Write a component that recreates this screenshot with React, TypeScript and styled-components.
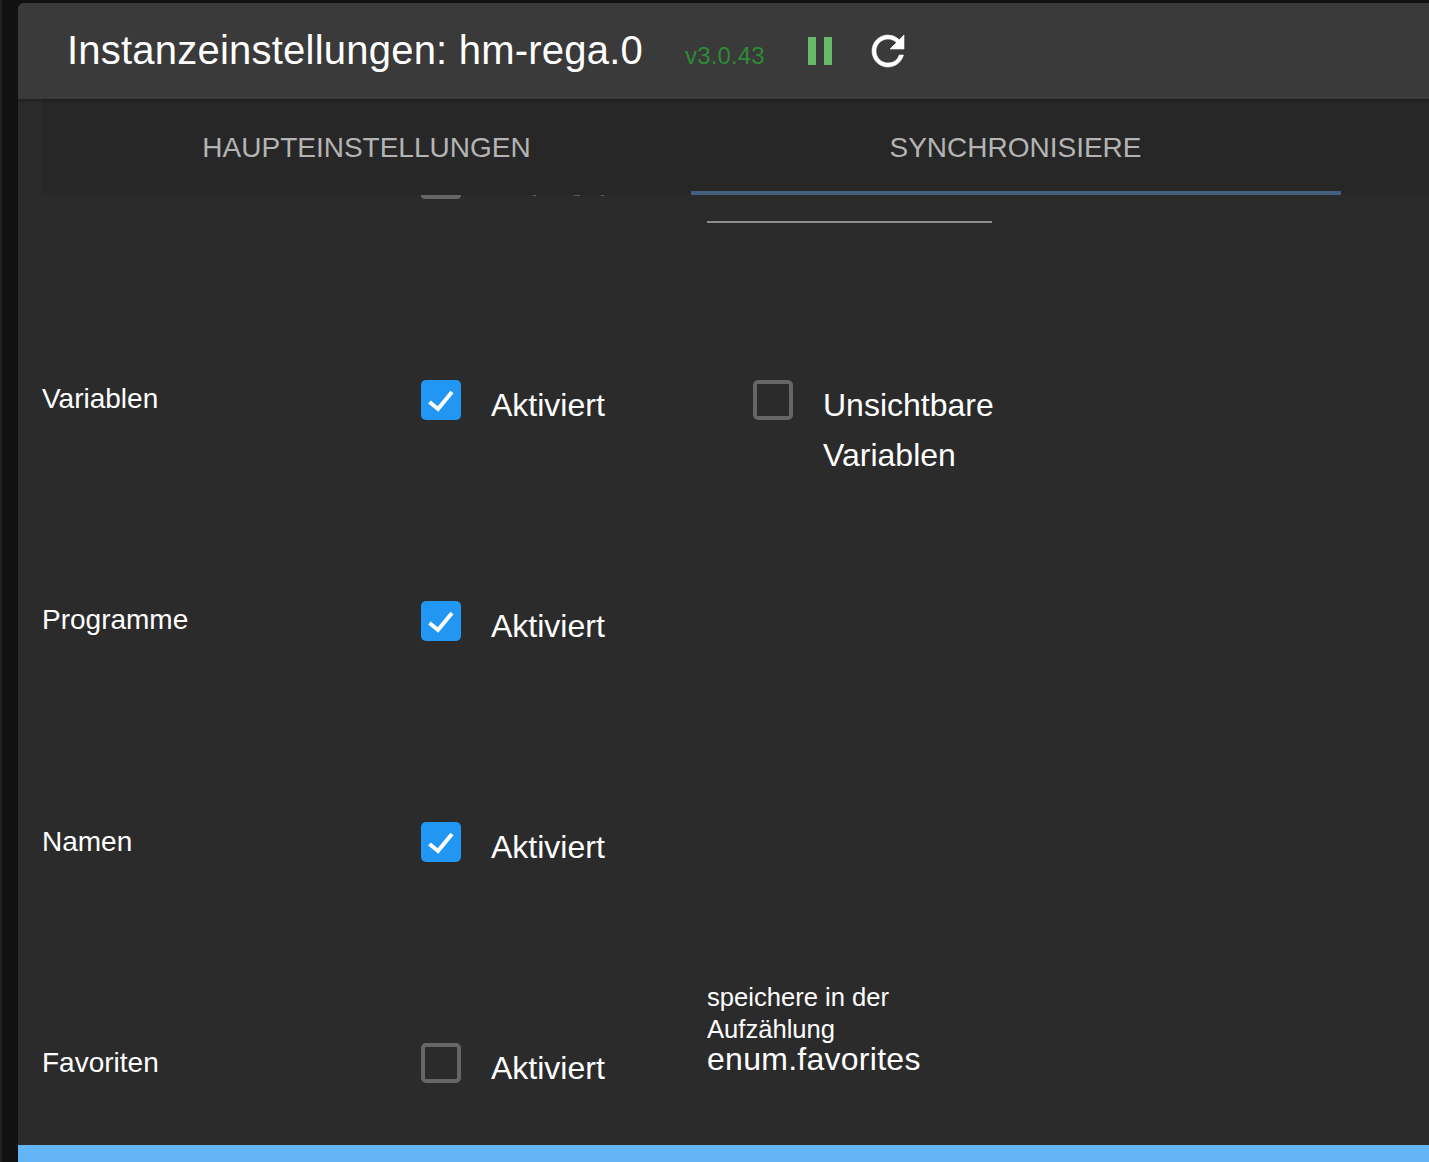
import React from 'react';
import styled, { createGlobalStyle } from 'styled-components';

const GlobalStyle = createGlobalStyle`
  html, body {
    margin: 0;
    padding: 0;
    height: 100%;
    background: #111111;
    overflow: hidden;
  }
  #root {
    height: 100%;
  }
`;

const Backdrop = styled.div`
  height: 1162px;
  padding: 3px 0 0 16px;
  box-sizing: border-box;
  background: #111111;
  border-left: 2px solid #222222;
  font-family: "Liberation Sans", Arial, sans-serif;
`;

const Dialog = styled.div`
  height: 100%;
  display: flex;
  flex-direction: column;
  background: #2b2b2b;
  border-radius: 6px 0 0 0;
  overflow: hidden;
`;

const Header = styled.header`
  height: 96px;
  flex: none;
  display: flex;
  align-items: center;
  padding-left: 49px;
  background: #3a3a3a;
  box-shadow: 0 2px 3px rgba(0, 0, 0, 0.25);
  position: relative;
  z-index: 2;
`;

const Title = styled.h1`
  margin: 0 0 2px;
  font-size: 40px;
  font-weight: 400;
  letter-spacing: 0.22px;
  color: #ffffff;
  white-space: nowrap;
`;

const Version = styled.span`
  margin: 10px 0 0 42px;
  font-size: 24px;
  letter-spacing: 0.15px;
  color: #2e8b35;
`;

const PauseIcon = styled.svg`
  margin: 0 0 0 43px;
  width: 26px;
  height: 28px;
  fill: #66bb6a;
`;

const ReloadIcon = styled.svg`
  margin: 0 0 0 38px;
  width: 32px;
  height: 32px;
  fill: #ffffff;
  stroke: #ffffff;
  stroke-width: 0.3;
  overflow: visible;
`;

const Tabs = styled.nav`
  height: 96px;
  flex: none;
  display: grid;
  grid-template-columns: 649px 650px;
  margin-left: 24px;
  background: #272727;
`;

const Tab = styled.div<{ $active?: boolean }>`
  height: 96px;
  padding: 6px ${(p) => (p.$active ? '1px' : '0')} 0 0;
  box-sizing: border-box;
  display: flex;
  align-items: center;
  justify-content: center;
  font-size: 28px;
  color: #b4b4b4;
  border-bottom: 4px solid ${(p) => (p.$active ? '#44607c' : 'transparent')};
`;

const Body = styled.main`
  flex: 1;
  min-height: 0;
  overflow: hidden;
  padding-left: 24px;
`;

const ScrolledOff = styled.div`
  height: 185px;
  display: flex;
  align-items: flex-start;
`;

const BoxSliver = styled.div`
  margin-left: 379px;
  width: 40px;
  height: 4px;
  background: #666666;
  border-radius: 0 0 5px 5px;
`;

// bottoms of the letters of the row that is scrolled under the tabs
const Descender = styled.div<{ $gap: number; $width: number }>`
  margin-left: ${(p) => p.$gap}px;
  width: ${(p) => p.$width}px;
  height: 1px;
  background: #5c5c5c;
`;

const Underline = styled.div`
  margin: 26px 0 0 103px;
  width: 285px;
  height: 2px;
  background: #8c8c8c;
`;

const Row = styled.section`
  height: 221px;
  display: grid;
  grid-template-columns: 379px 286px 1fr;
  align-items: start;
`;

const Label = styled.div<{ $raised?: boolean }>`
  margin-top: ${(p) => (p.$raised ? '-1px' : '0')};
  font-size: 28px;
  line-height: 40px;
  color: #ffffff;
`;

const Check = styled.label`
  display: flex;
  align-items: flex-start;
  gap: 30px;
  font-size: 32px;
  line-height: 50px;
  color: #ffffff;
`;

const Box = styled.span<{ $checked?: boolean }>`
  width: 40px;
  height: 40px;
  flex: none;
  box-sizing: border-box;
  display: flex;
  align-items: center;
  justify-content: center;
  border-radius: 5px;
  background: ${(p) => (p.$checked ? '#2196f3' : 'transparent')};
  border: ${(p) => (p.$checked ? 'none' : '4px solid #666666')};
`;

const CheckMark = styled.svg`
  width: 28px;
  height: 28px;
  fill: none;
  stroke: #ffffff;
  stroke-width: 4;
`;

const SideOption = styled(Check)`
  margin-left: 46px;
`;

const EnumNote = styled.div`
  font-size: 25.6px;
  line-height: 32px;
  color: #ffffff;
  margin-top: -62px;
`;

const EnumName = styled.div`
  font-size: 32px;
  letter-spacing: 0.27px;
  line-height: 28px;
`;

const Footer = styled.footer`
  height: 17px;
  flex: none;
  background: #64b5f6;
`;

const CheckBox: React.FC<{ checked?: boolean }> = ({ checked }) => (
  <Box $checked={checked}>
    {checked && (
      <CheckMark viewBox="0 0 28 28">
        <path d="M2.5 16 L11 23 L25 6" />
      </CheckMark>
    )}
  </Box>
);

const App: React.FC = () => (
  <>
    <GlobalStyle />
    <Backdrop>
      <Dialog>
        <Header>
          <Title>Instanzeinstellungen: hm-rega.0</Title>
          <Version>v3.0.43</Version>
          <PauseIcon viewBox="0 0 26 28">
            <rect x="0" y="0" width="8" height="28" />
            <rect x="16" y="0" width="8" height="28" />
          </PauseIcon>
          <ReloadIcon viewBox="4 4 16 16">
            <path d="M17.65 6.35A7.958 7.958 0 0 0 12 4c-4.42 0-7.99 3.58-7.99 8s3.57 8 7.99 8c3.73 0 6.84-2.55 7.73-6h-2.08A5.99 5.99 0 0 1 12 18c-3.31 0-6-2.69-6-6s2.69-6 6-6c1.66 0 3.14.69 4.22 1.78L13 11h7V4l-2.35 2.35z" />
          </ReloadIcon>
        </Header>
        <Tabs>
          <Tab>HAUPTEINSTELLUNGEN</Tab>
          <Tab $active>SYNCHRONISIERE</Tab>
        </Tabs>
        <Body>
          <ScrolledOff>
            <BoxSliver />
            <Descender $gap={72} $width={3} />
            <Descender $gap={38} $width={6} />
            <Descender $gap={21} $width={3} />
            <Underline />
          </ScrolledOff>
          <Row>
            <Label $raised>Variablen</Label>
            <Check>
              <CheckBox checked />
              Aktiviert
            </Check>
            <SideOption>
              <CheckBox />
              <span>Unsichtbare<br />Variablen</span>
            </SideOption>
          </Row>
          <Row>
            <Label $raised>Programme</Label>
            <Check>
              <CheckBox checked />
              Aktiviert
            </Check>
          </Row>
          <Row>
            <Label>Namen</Label>
            <Check>
              <CheckBox checked />
              Aktiviert
            </Check>
          </Row>
          <Row>
            <Label>Favoriten</Label>
            <Check>
              <CheckBox />
              Aktiviert
            </Check>
            <EnumNote>
              speichere in der<br />Aufzählung
              <EnumName>enum.favorites</EnumName>
            </EnumNote>
          </Row>
        </Body>
        <Footer />
      </Dialog>
    </Backdrop>
  </>
);

export default App;
